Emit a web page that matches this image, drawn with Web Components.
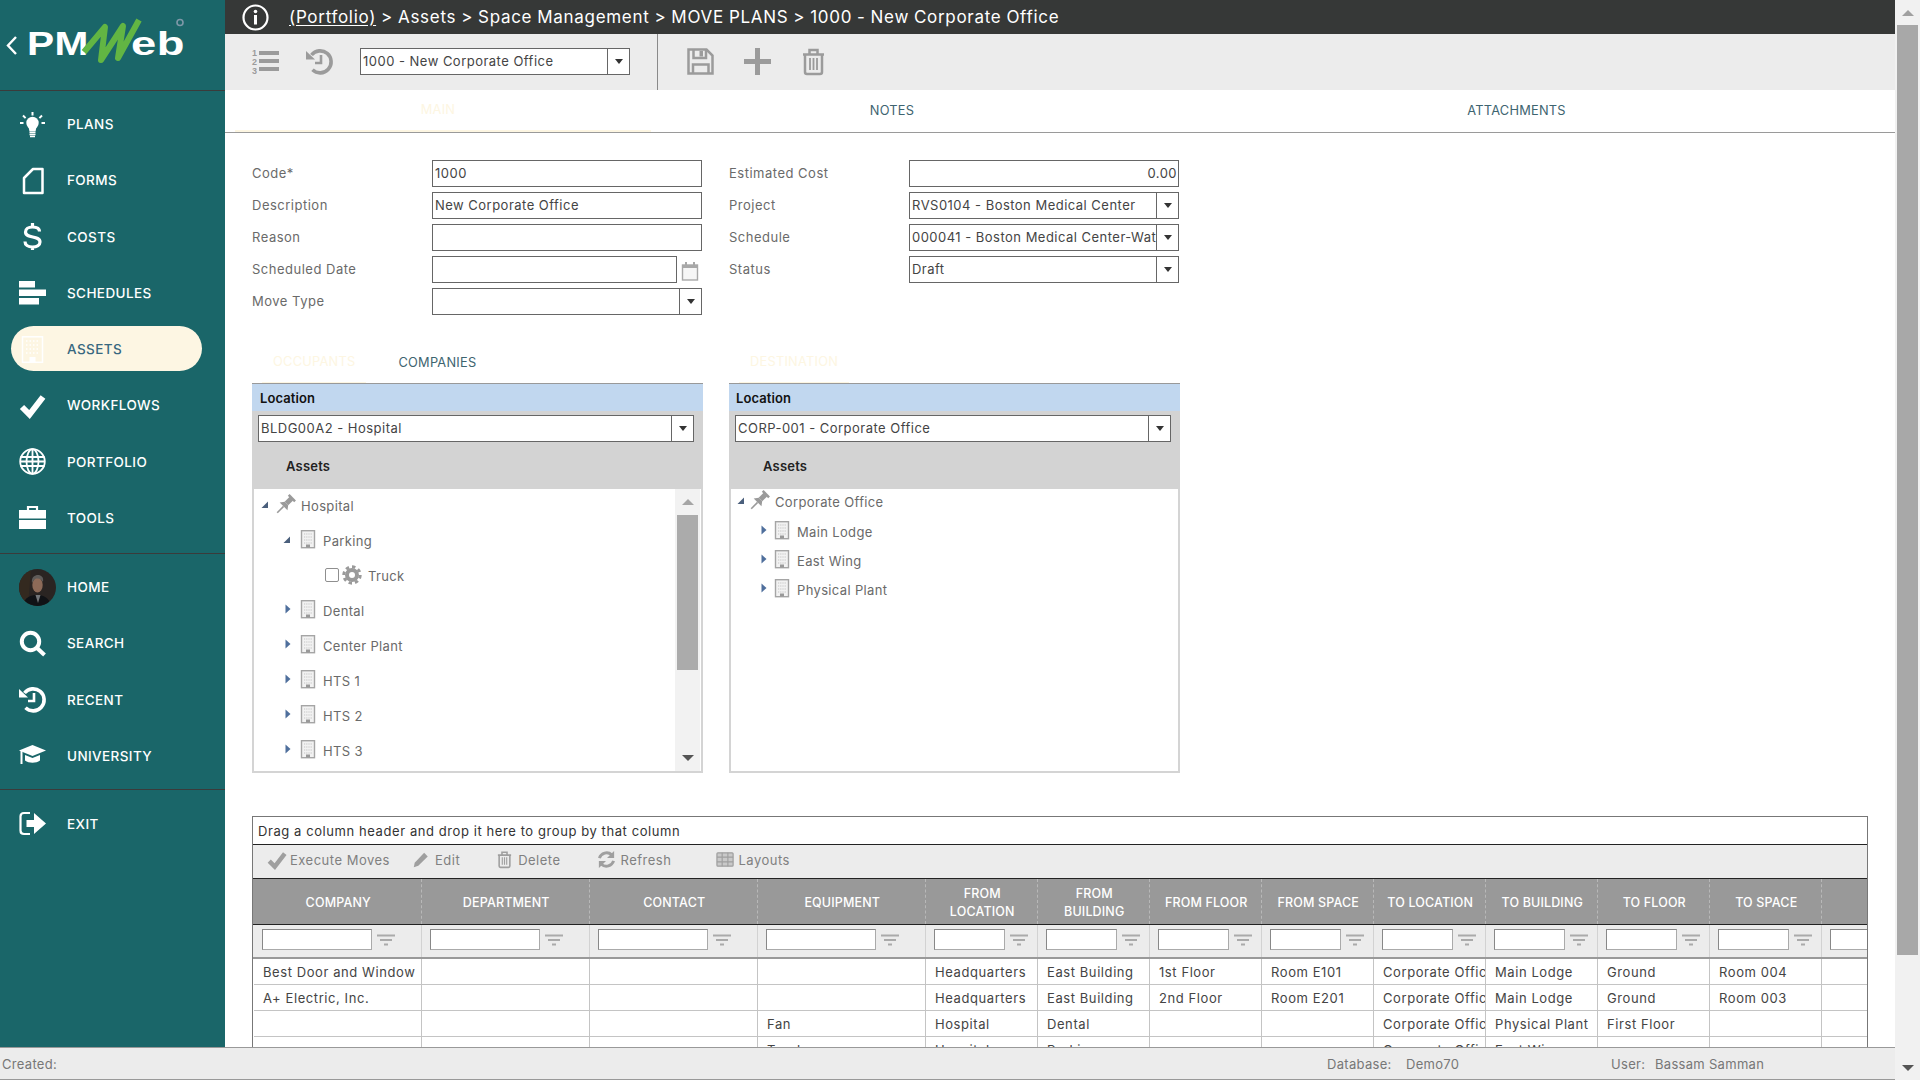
<!DOCTYPE html>
<html lang="en">
<head>
<meta charset="utf-8">
<title>PMWeb - Move Plans</title>
<style>
	html, body {
		margin: 0;
		padding: 0;
		height: 100%;
		overflow: hidden;
		background: #fff;
		font-family: Inter, "Open Sans", sans-serif;
	}
</style>
</head>
<body>
<pm-app>
	<pm-sidebar slot="side"></pm-sidebar>
	<pm-topbar slot="main" path="Assets > Space Management > MOVE PLANS > 1000 - New Corporate Office"></pm-topbar>
	<pm-toolbar slot="main" record="1000 - New Corporate Office"></pm-toolbar>
	<pm-tabs slot="main"></pm-tabs>
	<pm-form slot="main"></pm-form>
	<pm-panels slot="main"></pm-panels>
	<pm-grid slot="main"></pm-grid>
	<pm-status slot="status"></pm-status>
	<pm-scrollbar slot="scroll"></pm-scrollbar>
</pm-app>

<script>
const ICONS = {
	bulb: `<path d="M13.5 1v3.5M4 4.5l2.6 2.6M23 4.5l-2.6 2.6M1 12h3.5M22.500 12H26" stroke="currentColor" stroke-width="2" fill="none"/><circle cx="13.5" cy="12" r="6.200" fill="currentColor"/><path d="M9.500 16h8l-1 4.500h-6z" fill="currentColor"/><path d="M10.500 21.500h6M10.500 23.500h6M11 25.500h5" stroke="currentColor" stroke-width="1.300"/>`,
	forms: `<path d="M5 11L14 2h9.500v24H5z" fill="none" stroke="currentColor" stroke-width="2.500" stroke-linejoin="round"/>`,
	dollar: `<path d="M20.500 8.500C20.500 5.500 17.500 4 13.500 4S6.500 6 6.500 9c0 7 14.500 3 14.500 10 0 3-3 5-7.500 5S6 22 6 18.500M13.500 0v4M13.500 24v3" fill="none" stroke="currentColor" stroke-width="3.200"/>`,
	schedules: `<path d="M0 2h16v6.500H0zM0 10.500h27V17H0zM0 19h20v6.500H0z" fill="currentColor"/>`,
	building: `<rect x="3.500" y="0.800" width="20" height="25.500" fill="none" stroke="#fff" stroke-width="1.500"/><path d="M7 5h13M7 9h13M7 13h13M7 17h13" stroke="#fff" stroke-width="1.500" stroke-dasharray="1.500 2"/><rect x="10.500" y="21" width="6" height="5" fill="#fff"/>`,
	check: `<path d="M3 15l7.500 7.500L24 5" fill="none" stroke="currentColor" stroke-width="6"/>`,
	globe: `<g fill="none" stroke="currentColor" stroke-width="1.800"><circle cx="13.500" cy="13.500" r="12.300"/><ellipse cx="13.500" cy="13.500" rx="6" ry="12.300"/><path d="M13.500 1v25M1.500 9h24M1.500 13.500h24M1.500 18h24"/></g>`,
	tools: `<path d="M9 6V3h9v3" fill="none" stroke="currentColor" stroke-width="2.200"/><path d="M0 6h27v8.500H0zM0 16h27v9H0z" fill="currentColor"/>`,
	search: `<circle cx="11.500" cy="11.500" r="8.700" fill="none" stroke="currentColor" stroke-width="4"/><path d="M17.500 17.500l8 7.500" stroke="currentColor" stroke-width="4"/>`,
	recent: `<path d="M5.500 7A11 11 0 1 1 6.500 21.800" fill="none" stroke="currentColor" stroke-width="3.600"/><path d="M0 3v8.500h9z" fill="currentColor"/><path d="M15 7v8H9" fill="none" stroke="currentColor" stroke-width="2.600"/>`,
	university: `<path d="M13.500 3L27 8.500 13.500 14 0 8.500z" fill="currentColor"/><path d="M6 13v5.500c4 3 11 3 15 0V13l-7.500 3z" fill="currentColor"/><path d="M2.500 9v13" stroke="currentColor" stroke-width="2"/>`,
	exit: `<path d="M11 3H5C3 3 1.500 4.500 1.500 6.500v14c0 2 1.500 3.500 3.500 3.500h6" fill="none" stroke="currentColor" stroke-width="2.200"/><path d="M7.500 10H15V3l12 10.500L15 24v-7H7.500z" fill="currentColor"/>`,
	info: `<circle cx="13.500" cy="13.500" r="12" fill="none" stroke="currentColor" stroke-width="2.200"/><circle cx="13.500" cy="7.500" r="1.800" fill="currentColor"/><path d="M13.500 11v9.500" stroke="currentColor" stroke-width="3"/>`,
	numbered: `<g fill="currentColor" font-family="Liberation Sans, sans-serif" font-size="9" font-weight="700"><text x="0" y="7.500">1</text><text x="0" y="16.500">2</text><text x="0" y="26">3</text></g><path d="M7 5h20M7 13h20M7 21h20" stroke="currentColor" stroke-width="4"/>`,
	save: `<path d="M1.500 1.500h18l6 6v18h-24z" fill="none" stroke="currentColor" stroke-width="2.500"/><path d="M6.500 1.500v8.500h12.500V1.500" fill="none" stroke="currentColor" stroke-width="2.500"/><rect x="12.500" y="3" width="3.500" height="5.500" fill="currentColor"/><path d="M6 25.500V16.500h15.500v9" fill="none" stroke="currentColor" stroke-width="2.500"/>`,
	plus: `<path d="M11 0h5v11h11v5H16v11h-5V16H0v-5h11z" fill="currentColor"/>`,
	trash: `<path d="M3 6.500h21M9.500 6V2h8v4" fill="none" stroke="currentColor" stroke-width="2.500"/><path d="M5 7v17c0 1 .8 2 2 2h13c1.200 0 2-1 2-2V7" fill="none" stroke="currentColor" stroke-width="2.500"/><path d="M10 10v12M13.500 10v12M17 10v12" stroke="currentColor" stroke-width="1.800"/>`,
	calendar: `<rect x="1.500" y="5" width="15" height="15" fill="#f6f6f6" stroke="currentColor" stroke-width="1.400"/><path d="M1 5h16v3h-16z" fill="currentColor"/><path d="M5 2v4M13 2v4" stroke="currentColor" stroke-width="2"/>`,
	pin: `<g transform="rotate(45 10 10)" fill="currentColor"><rect x="5.500" y="-1" width="9" height="2.500"/><rect x="7.500" y="1" width="5" height="7"/><path d="M4.500 12h11l-3-4h-5z"/><rect x="9.200" y="12" width="1.600" height="9"/></g>`,
	tower: `<g transform="translate(1 0)"><rect x="3.500" y="0.700" width="13" height="17" fill="#f2f2f2" stroke="#a5a5a5" stroke-width="1.400"/><path d="M6 4h8M6 7h8M6 10h8M6 13h8" stroke="#c4c4c4" stroke-width="1.200" stroke-dasharray="1.200 1"/><rect x="8" y="14.500" width="4" height="3" fill="#999"/></g>`,
	gear: `<circle cx="10" cy="10" r="5" fill="none" stroke="currentColor" stroke-width="4"/><circle cx="10" cy="10" r="8.200" fill="none" stroke="currentColor" stroke-width="3" stroke-dasharray="3.400 3"/>`,
	pencil: `<path d="M2 18l1-5L13.500 2l4 4L7 16.500z" fill="currentColor"/>`,
	refresh: `<path d="M2.500 8.500A8 8 0 0 1 15.500 5" fill="none" stroke="currentColor" stroke-width="3"/><path d="M18 1v7.500h-7.500z" fill="currentColor"/><path d="M17.500 11.500A8 8 0 0 1 4.500 15" fill="none" stroke="currentColor" stroke-width="3"/><path d="M2 19v-7.500h7.500z" fill="currentColor"/>`,
	table: `<rect x="1" y="3" width="17" height="14" rx="1" fill="#c9c9c9" stroke="currentColor" stroke-width="1.300"/><path d="M1 7.500h17M1 12.500h17M6.500 3v14M12.500 3v14" stroke="currentColor" stroke-width="1.200"/>`,
	filter: `<path d="M0 1.500h18M3 6h12M7 10.500h4" stroke="currentColor" stroke-width="2.200"/>`,
};

class pmIcon extends HTMLElement {
	constructor() {
		super();
		this.shadowDOM = this.attachShadow({ mode: "open" });
	}

	connectedCallback() {
		const size = this.getAttribute("size") || 27;
		const box = this.getAttribute("box") || `0 0 ${size} ${size}`;
		this.shadowDOM.innerHTML = `
		<style>
			:host { display: inline-flex; line-height: 0; flex: none; }
			svg { overflow: visible; display: block; }
		</style>
		<svg width="${size}" height="${size}" viewBox="${box}">${ICONS[this.getAttribute("name")]}</svg>`;
	}
}
customElements.define("pm-icon", pmIcon);

class pmApp extends HTMLElement {
	constructor() {
		super();
		this.shadowDOM = this.attachShadow({ mode: "open" });
	}

	connectedCallback() {
		this.shadowDOM.innerHTML = `
		<style>
			:host { display: flex; width: 1920px; height: 1080px; overflow: hidden; }
			.left { width: 1895px; height: 1080px; display: flex; flex-direction: column; }
			.top { flex: 1; min-height: 0; display: flex; }
			.main { flex: 1; min-width: 0; display: flex; flex-direction: column; overflow: hidden; }
		</style>
		<div class="left">
			<div class="top">
				<slot name="side"></slot>
				<div class="main"><slot name="main"></slot></div>
			</div>
			<slot name="status"></slot>
		</div>
		<slot name="scroll"></slot>`;
	}
}
customElements.define("pm-app", pmApp);

class pmSidebar extends HTMLElement {
	constructor() {
		super();
		this.shadowDOM = this.attachShadow({ mode: "open" });
	}

	item(icon, label, active) {
		return `
		<div class="item ${active ? "active" : ""}">
			<div class="ico">${icon === "avatar" ? this.avatar() : `<pm-icon name="${icon}"></pm-icon>`}</div>
			<span>${label}</span>
		</div>`;
	}

	avatar() {
		return `<svg width="37" height="37" viewBox="0 0 37 37">
			<defs><clipPath id="av"><circle cx="18.500" cy="18.500" r="18.500"/></clipPath></defs>
			<g clip-path="url(#av)">
				<rect width="37" height="37" fill="#2a2422"/>
				<path d="M0 0h12L9 37H0z" fill="#33291f"/>
				<path d="M4 37c1-9 8-11 14-11s13 3 14 11z" fill="#101216"/>
				<path d="M16.500 26l2.500 8 2.500-8z" fill="#73767a"/>
				<ellipse cx="18.500" cy="16" rx="5.200" ry="7.500" fill="#8d6a58"/>
				<path d="M13 14c-1-6 3-8 6-8s6 2 5 7c-2-3-3-3.500-6-3.500s-3 2-5 4.500z" fill="#5f5b59"/>
			</g>
		</svg>`;
	}

	connectedCallback() {
		this.shadowDOM.innerHTML = `
		<style>
			:host { display: block; width: 225px; flex: none; background: #1a6669; color: #fff; font: 500 13.500px Inter, sans-serif; letter-spacing: .4px; }
			.logo { height: 90px; border-bottom: 1.500px solid #3b3b3b; }
			.logo svg { display: block; }
			.group { border-bottom: 1.500px solid #3b3b3b; }
			.g1 { padding: 5px 0 6.500px; }
			.g2 { padding: 5.500px 0 5px; }
			.g3 { border: 0; padding: 5.500px 0; }
			.item { height: 56.250px; display: flex; align-items: center; padding-left: 19px; position: relative; }
			.ico { width: 48px; display: flex; align-items: center; }
			.active::before {
				content: "";
				position: absolute;
				left: 11px; right: 23px; top: 5px; bottom: 6px;
				border-radius: 23px;
				background: #fdf6e3;
			}
			.active > * { position: relative; }
			.active span { color: #38687f; }
		</style>
		<div class="logo">
			<svg width="225" height="90" viewBox="0 0 225 90">
				<path d="M16 37l-8 8.500 8 8.500" fill="none" stroke="#fff" stroke-width="2.400"/>
				<text x="27" y="55" fill="#fff" font-family="Liberation Sans, sans-serif" font-weight="700" font-size="33" textLength="62" lengthAdjust="spacingAndGlyphs">PM</text>
				<text x="131" y="55" fill="#fff" font-family="Liberation Sans, sans-serif" font-weight="700" font-size="33" textLength="54" lengthAdjust="spacingAndGlyphs">eb</text>
				<path d="M84 52L105 27 101 60 123 26 118 58 139 20" fill="none" stroke="#62b543" stroke-width="6" stroke-linejoin="round"/>
				<circle cx="180" cy="22.500" r="3" fill="none" stroke="#7e98a8" stroke-width="1.600"/>
			</svg>
		</div>
		<div class="group g1">
			${this.item("bulb", "PLANS")}
			${this.item("forms", "FORMS")}
			${this.item("dollar", "COSTS")}
			${this.item("schedules", "SCHEDULES")}
			${this.item("building", "ASSETS", true)}
			${this.item("check", "WORKFLOWS")}
			${this.item("globe", "PORTFOLIO")}
			${this.item("tools", "TOOLS")}
		</div>
		<div class="group g2">
			${this.item("avatar", "HOME")}
			${this.item("search", "SEARCH")}
			${this.item("recent", "RECENT")}
			${this.item("university", "UNIVERSITY")}
		</div>
		<div class="group g3">
			${this.item("exit", "EXIT")}
		</div>`;
	}
}
customElements.define("pm-sidebar", pmSidebar);

class pmTopbar extends HTMLElement {
	constructor() {
		super();
		this.shadowDOM = this.attachShadow({ mode: "open" });
	}

	connectedCallback() {
		this.shadowDOM.innerHTML = `
		<style>
			:host { display: flex; flex: none; align-items: center; height: 34px; background: #363837; color: #fff; font: 400 17px Inter, sans-serif; letter-spacing: .7px; padding-left: 17px; white-space: pre; }
			pm-icon { margin-right: 20px; }
			u { text-underline-offset: 2px; }
			span { margin-top: -1px; word-spacing: -.5px; }
		</style>
		<pm-icon name="info"></pm-icon>
		<span><u>(Portfolio)</u> &gt; ${this.getAttribute("path").replace(/>/g, "&gt;")}</span>`;
	}
}
customElements.define("pm-topbar", pmTopbar);

class pmInput extends HTMLElement {
	constructor() {
		super();
		this.shadowDOM = this.attachShadow({ mode: "open" });
	}

	connectedCallback() {
		const combo = this.hasAttribute("combo");
		const right = this.hasAttribute("right");
		this.shadowDOM.innerHTML = `
		<style>
			:host { display: flex; box-sizing: border-box; height: 27px; width: 270px; flex: none; border: 1px solid #666; background: #fff; color: #444; font: 400 13px Inter, sans-serif; letter-spacing: .48px; }
			.val { flex: 1; min-width: 0; overflow: hidden; white-space: pre; line-height: 25px; padding: 0 1px 0 2px; text-align: ${right ? "right" : "left"}; }
			.btn { width: 21px; flex: none; border-left: 1px solid #666; display: flex; align-items: center; justify-content: center; }
			.btn i { width: 0; height: 0; border-left: 4.500px solid transparent; border-right: 4.500px solid transparent; border-top: 5px solid #333; }
		</style>
		<div class="val">${this.getAttribute("value") || ""}</div>
		${combo ? `<div class="btn"><i></i></div>` : ""}`;
	}
}
customElements.define("pm-input", pmInput);

class pmToolbar extends HTMLElement {
	constructor() {
		super();
		this.shadowDOM = this.attachShadow({ mode: "open" });
	}

	connectedCallback() {
		this.shadowDOM.innerHTML = `
		<style>
			:host { display: flex; flex: none; align-items: center; height: 56px; box-sizing: border-box; padding: 0 0 1px 27px; background: #ececec; color: #9b9b9b; }
			.hist { margin-left: 27px; }
			pm-input { margin-left: 27px; }
			.sep { width: 1px; height: 56px; background: #8a8a8a; margin: 0 29px 0 26.500px; }
			.gap { margin-left: 30px; }
			.gap2 { margin-left: 29px; }
		</style>
		<pm-icon name="numbered"></pm-icon>
		<pm-icon class="hist" name="recent"></pm-icon>
		<pm-input combo value="${this.getAttribute("record")}"></pm-input>
		<div class="sep"></div>
		<pm-icon name="save"></pm-icon>
		<pm-icon class="gap" name="plus"></pm-icon>
		<pm-icon class="gap2" name="trash"></pm-icon>`;
	}
}
customElements.define("pm-toolbar", pmToolbar);

class pmTabs extends HTMLElement {
	constructor() {
		super();
		this.shadowDOM = this.attachShadow({ mode: "open" });
	}

	connectedCallback() {
		this.shadowDOM.innerHTML = `
		<style>
			:host { display: grid; flex: none; grid-template-columns: 10px 416px 482px 1fr; height: 43px; border-bottom: 1px solid #9a9a9a; box-sizing: border-box; color: #3e6470; font: 400 12.800px Inter, sans-serif; letter-spacing: .25px; }
			div { display: flex; align-items: center; justify-content: center; padding-bottom: 1px; }
			.on { color: #fdf6e2; border-bottom: 2px solid #fdf6e2; padding-right: 10px; }
		</style>
		<span></span>
		<div class="on">MAIN</div>
		<div>NOTES</div>
		<div style="padding-left: 5px">ATTACHMENTS</div>`;
	}
}
customElements.define("pm-tabs", pmTabs);

class pmField extends HTMLElement {
	constructor() {
		super();
		this.shadowDOM = this.attachShadow({ mode: "open" });
	}

	connectedCallback() {
		this.shadowDOM.innerHTML = `
		<style>
			:host { display: flex; align-items: center; height: 27px; color: #6a6a6a; font: 400 13px Inter, sans-serif; letter-spacing: .5px; }
			label { width: 180px; flex: none; margin-top: -1px; }
			.ctl { display: flex; align-items: center; }
		</style>
		<label>${this.getAttribute("label")}</label>
		<div class="ctl"><slot></slot></div>`;
	}
}
customElements.define("pm-field", pmField);

class pmForm extends HTMLElement {
	constructor() {
		super();
		this.shadowDOM = this.attachShadow({ mode: "open" });
	}

	connectedCallback() {
		this.shadowDOM.innerHTML = `
		<style>
			:host { display: grid; flex: none; grid-template-columns: 450px 450px; grid-auto-rows: 27px; column-gap: 27px; row-gap: 5px; grid-auto-flow: column; grid-template-rows: repeat(5, 27px); padding: 27px 0 0 27px; }
			pm-icon { margin-left: 4px; color: #a8a8a8; }
			.short { width: 245px; }
		</style>
		<pm-field label="Code*"><pm-input value="1000"></pm-input></pm-field>
		<pm-field label="Description"><pm-input value="New Corporate Office"></pm-input></pm-field>
		<pm-field label="Reason"><pm-input></pm-input></pm-field>
		<pm-field label="Scheduled Date"><pm-input class="short"></pm-input><pm-icon name="calendar" size="20"></pm-icon></pm-field>
		<pm-field label="Move Type"><pm-input combo></pm-input></pm-field>
		<pm-field label="Estimated Cost"><pm-input right value="0.00"></pm-input></pm-field>
		<pm-field label="Project"><pm-input combo value="RVS0104 - Boston Medical Center"></pm-input></pm-field>
		<pm-field label="Schedule"><pm-input combo value="000041 - Boston Medical Center-Water Line"></pm-input></pm-field>
		<pm-field label="Status"><pm-input combo value="Draft"></pm-input></pm-field>`;
	}
}
customElements.define("pm-form", pmForm);

class pmNode extends HTMLElement {
	constructor() {
		super();
		this.shadowDOM = this.attachShadow({ mode: "open" });
	}

	connectedCallback() {
		const state = this.getAttribute("state");
		const icon = this.getAttribute("icon");
		const level = Number(this.getAttribute("level") || 0);
		let arrow = "";
		if (state === "open") arrow = `<svg width="10" height="10" viewBox="0 0 10 10"><path d="M8 1.500V8H1.500z" fill="#4a5f7c"/></svg>`;
		if (state === "closed") arrow = `<svg width="10" height="10" viewBox="0 0 10 10"><path d="M3.500 0.500L8.500 5 3.500 9.500z" fill="#4f6f9c"/></svg>`;
		this.shadowDOM.innerHTML = `
		<style>
			:host { display: flex; align-items: center; height: var(--row, 35px); padding-left: calc(var(--start, 6px) + ${level * 22}px); color: #6a6a6a; font: 400 13px Inter, sans-serif; letter-spacing: .35px; white-space: nowrap; }
			.arrow { width: 10px; height: 10px; flex: none; margin-top: ${state === "closed" ? -12 : -10}px; margin-right: var(--after, 5px); }
			.box { width: 14px; height: 14px; box-sizing: border-box; border: 1.500px solid #8f8f8f; border-radius: 2px; margin: -4px 3px 0 6px; background: #fff; }
			pm-icon { color: #9a9a9a; margin-top: -4px; }
			span { margin: -1px 0 0 6px; }
		</style>
		<div class="arrow">${arrow}</div>
		${this.hasAttribute("check") ? `<div class="box"></div>` : ""}
		<pm-icon name="${icon}" size="20"></pm-icon>
		<span>${this.getAttribute("label")}</span>`;
	}
}
customElements.define("pm-node", pmNode);

class pmPanel extends HTMLElement {
	constructor() {
		super();
		this.shadowDOM = this.attachShadow({ mode: "open" });
	}

	connectedCallback() {
		const tabs = this.getAttribute("tabs").split(",");
		const scroll = this.hasAttribute("scroll");
		this.shadowDOM.innerHTML = `
		<style>
			:host { display: flex; flex-direction: column; width: var(--w, 451px); flex: none; font: 400 13px Inter, sans-serif; }
			.tabs { display: flex; height: 34px; box-sizing: border-box; padding-left: var(--tabs, 10px); font-size: 12.800px; letter-spacing: .25px; color: #3e6470; }
			.tabs div { display: flex; align-items: center; padding: 0 11px 8px; }
			.tabs .on { color: #fdf6e2; border-bottom: 1px solid #fdf6e2; }
			.tabs .off { margin-left: 21px; }
			.head { height: 27px; border-top: 1px solid #999; background: #c1d7ef; color: #111; font-weight: 600; letter-spacing: .1px; line-height: 28px; padding-left: var(--ox, 8px); }
			.tools { height: 78px; box-sizing: border-box; background: #d3d3d3; padding: 4px 0 0 var(--cx, 6px); }
			.tools pm-input { width: 436px; }
			.assets { color: #222; font-weight: 600; letter-spacing: .2px; padding: 14px 0 0 var(--ax, 28px); line-height: 20px; }
			.tree { height: 284px; border: 2px solid #d4d4d4; border-top: 0; display: flex; box-sizing: border-box; }
			.nodes { flex: 1; min-width: 0; overflow: hidden; }
			.bar { width: 25px; flex: none; background: #f2f2f2; margin-right: 1px; padding: 0 2px; box-sizing: border-box; display: flex; flex-direction: column; align-items: stretch; }
			.arr { height: 26px; display: flex; align-items: center; justify-content: center; flex: none; }
			.arr i { width: 0; height: 0; border-left: 6px solid transparent; border-right: 6px solid transparent; }
			.up i { border-bottom: 6px solid #a5a5a5; }
			.thumb { height: 155px; background: #ababab; flex: none; }
			.rest { flex: 1; }
			.dn i { border-top: 6px solid #555; }
		</style>
		<div class="tabs">
			${tabs.map((t, i) => `<div class="${i === 0 ? "on" : "off"}">${t}</div>`).join("")}
		</div>
		<div class="head">Location</div>
		<div class="tools">
			<pm-input combo value="${this.getAttribute("location")}"></pm-input>
			<div class="assets">Assets</div>
		</div>
		<div class="tree">
			<div class="nodes"><slot></slot></div>
			${scroll ? `<div class="bar"><div class="arr up"><i></i></div><div class="thumb"></div><div class="rest"></div><div class="arr dn"><i></i></div></div>` : ""}
		</div>`;
	}
}
customElements.define("pm-panel", pmPanel);

class pmPanels extends HTMLElement {
	constructor() {
		super();
		this.shadowDOM = this.attachShadow({ mode: "open" });
	}

	connectedCallback() {
		this.shadowDOM.innerHTML = `
		<style>
			:host { display: flex; flex: none; gap: 26px; padding: 34px 0 0 27px; }
			.right { --w: 451px; --ox: 7px; --cx: 6px; --ax: 28px; --row: 29px; --start: 5px; --after: 3px; --tabs: 10px; }
			.first { margin: -1px 0 1px; }
		</style>
		<pm-panel scroll tabs="OCCUPANTS,COMPANIES" location="BLDG00A2 - Hospital">
			<pm-node state="open" icon="pin" label="Hospital"></pm-node>
			<pm-node level="1" state="open" icon="tower" label="Parking"></pm-node>
			<pm-node level="2" check icon="gear" label="Truck"></pm-node>
			<pm-node level="1" state="closed" icon="tower" label="Dental"></pm-node>
			<pm-node level="1" state="closed" icon="tower" label="Center Plant"></pm-node>
			<pm-node level="1" state="closed" icon="tower" label="HTS 1"></pm-node>
			<pm-node level="1" state="closed" icon="tower" label="HTS 2"></pm-node>
			<pm-node level="1" state="closed" icon="tower" label="HTS 3"></pm-node>
		</pm-panel>
		<pm-panel class="right" tabs="DESTINATION" location="CORP-001 - Corporate Office">
			<pm-node class="first" state="open" icon="pin" label="Corporate Office"></pm-node>
			<pm-node level="1" state="closed" icon="tower" label="Main Lodge"></pm-node>
			<pm-node level="1" state="closed" icon="tower" label="East Wing"></pm-node>
			<pm-node level="1" state="closed" icon="tower" label="Physical Plant"></pm-node>
		</pm-panel>`;
	}
}
customElements.define("pm-panels", pmPanels);

class pmGrid extends HTMLElement {
	constructor() {
		super();
		this.shadowDOM = this.attachShadow({ mode: "open" });
	}

	connectedCallback() {
		const heads = ["COMPANY", "DEPARTMENT", "CONTACT", "EQUIPMENT", "FROM<br>LOCATION", "FROM<br>BUILDING", "FROM FLOOR", "FROM SPACE", "TO LOCATION", "TO BUILDING", "TO FLOOR", "TO SPACE", ""];
		const rows = [
			["Best Door and Window", "", "", "", "Headquarters", "East Building", "1st Floor", "Room E101", "Corporate Office", "Main Lodge", "Ground", "Room 004", ""],
			["A+ Electric, Inc.", "", "", "", "Headquarters", "East Building", "2nd Floor", "Room E201", "Corporate Office", "Main Lodge", "Ground", "Room 003", ""],
			["", "", "", "Fan", "Hospital", "Dental", "", "", "Corporate Office", "Physical Plant", "First Floor", "", ""],
			["", "", "", "Truck", "Hospital", "Parking", "", "", "Corporate Office", "East Wing", "", "", ""],
		];
		this.shadowDOM.innerHTML = `
		<style>
			:host { display: block; flex: 1; min-height: 0; margin: 43px 27px 0 27px; width: 1616px; box-sizing: border-box; border: 1px solid #777; border-bottom: 0; overflow: hidden; font: 400 13px Inter, sans-serif; letter-spacing: .58px; color: #444; }
			.group { height: 27px; line-height: 28px; padding-left: 5px; color: #333; border-bottom: 1px solid #222; }
			.bar { height: 29px; padding-bottom: 4px; background: #ececec; border-bottom: 1px solid #222; display: flex; align-items: center; color: #808080; letter-spacing: .5px; }
			.act { display: flex; align-items: center; gap: 3px; }
			.act pm-icon { color: #9f9f9f; }
			.wide { gap: 5px; }
			.row { display: grid; grid-template-columns: repeat(4, 168px) repeat(8, 112px) 46px; padding-left: 1px; }
			.heads { height: 45px; background: #999; color: #fff; font-size: 12.500px; font-weight: 500; letter-spacing: .15px; line-height: 18px; border-bottom: 1px solid #222; }
			.heads div { display: flex; align-items: center; justify-content: center; text-align: center; border-right: 1px dashed #b8b8b8; padding: 2px 0 0 1.500px; }
			.filters { height: 32px; background: #ececec; border-bottom: 2px solid #999; }
			.filters div { display: flex; align-items: center; padding-left: 8px; gap: 5px; border-right: 1px solid #d2d2d2; padding-bottom: 3px; }
			.filters i { display: block; width: 110px; height: 21px; box-sizing: border-box; flex: none; background: #fff; border: 1px solid #aaa; border-top-color: #888; border-left-color: #888; }
			.filters .n i { width: 71px; }
			.filters pm-icon { color: #aaa; }
			.cells div { height: 25px; line-height: 27px; padding-left: 9px; overflow: hidden; white-space: nowrap; border-right: 1px solid #c4c4c4; border-bottom: 1px solid #c4c4c4; }
		</style>
		<div class="group">Drag a column header and drop it here to group by that column</div>
		<div class="bar">
			<div class="act" style="margin-left: 14px"><pm-icon name="check" size="20" box="0 0 27 27"></pm-icon><span>Execute Moves</span></div>
			<div class="act wide" style="margin-left: 22px"><pm-icon name="pencil" size="18" box="0 0 20 20"></pm-icon><span>Edit</span></div>
			<div class="act wide" style="margin-left: 36px"><pm-icon name="trash" size="17" box="0 0 27 27"></pm-icon><span>Delete</span></div>
			<div class="act wide" style="margin-left: 36px"><pm-icon name="refresh" size="19" box="0 0 20 20"></pm-icon><span>Refresh</span></div>
			<div class="act" style="margin-left: 45px"><pm-icon name="table" size="19" box="0 0 20 20"></pm-icon><span>Layouts</span></div>
		</div>
		<div class="row heads">${heads.map(h => `<div>${h}</div>`).join("")}</div>
		<div class="row filters">${heads.map((h, i) => `<div class="${i > 3 ? "n" : ""}"><i></i><pm-icon name="filter" size="18" box="0 0 18 12"></pm-icon></div>`).join("")}</div>
		${rows.map(r => `<div class="row cells">${r.map(c => `<div>${c}</div>`).join("")}</div>`).join("")}`;
	}
}
customElements.define("pm-grid", pmGrid);

class pmStatus extends HTMLElement {
	constructor() {
		super();
		this.shadowDOM = this.attachShadow({ mode: "open" });
	}

	connectedCallback() {
		this.shadowDOM.innerHTML = `
		<style>
			:host { display: flex; flex: none; align-items: center; box-sizing: border-box; height: 33px; background: #ececec; border-top: 1px solid #999; border-bottom: 1px solid #999; color: #777; font: 400 13px Inter, sans-serif; letter-spacing: .3px; white-space: pre; padding-left: 2px; }
			.db { margin-left: auto; }
			.a { width: 79px; }
			.b { width: 205px; }
			.c { width: 44px; }
			.d { width: 240px; }
		</style>
		<span>Created:</span>
		<span class="db a">Database:</span><span class="b">Demo70</span><span class="c">User:</span><span class="d">Bassam Samman</span>`;
	}
}
customElements.define("pm-status", pmStatus);

class pmScrollbar extends HTMLElement {
	constructor() {
		super();
		this.shadowDOM = this.attachShadow({ mode: "open" });
	}

	connectedCallback() {
		this.shadowDOM.innerHTML = `
		<style>
			:host { display: flex; flex-direction: column; width: 25px; height: 1080px; flex: none; background: #f1f1f1; padding: 0 2px; box-sizing: border-box; }
			.arr { height: 25px; flex: none; display: flex; align-items: center; justify-content: center; }
			.arr i { width: 0; height: 0; border-left: 6px solid transparent; border-right: 6px solid transparent; }
			.up i { border-bottom: 6px solid #a0a0a0; }
			.dn i { border-top: 6px solid #555; }
			.thumb { height: 930px; flex: none; background: #a8a8a8; }
			.rest { flex: 1; }
		</style>
		<div class="arr up"><i></i></div>
		<div class="thumb"></div>
		<div class="rest"></div>
		<div class="arr dn"><i></i></div>`;
	}
}
customElements.define("pm-scrollbar", pmScrollbar);
</script>
</body>
</html>
